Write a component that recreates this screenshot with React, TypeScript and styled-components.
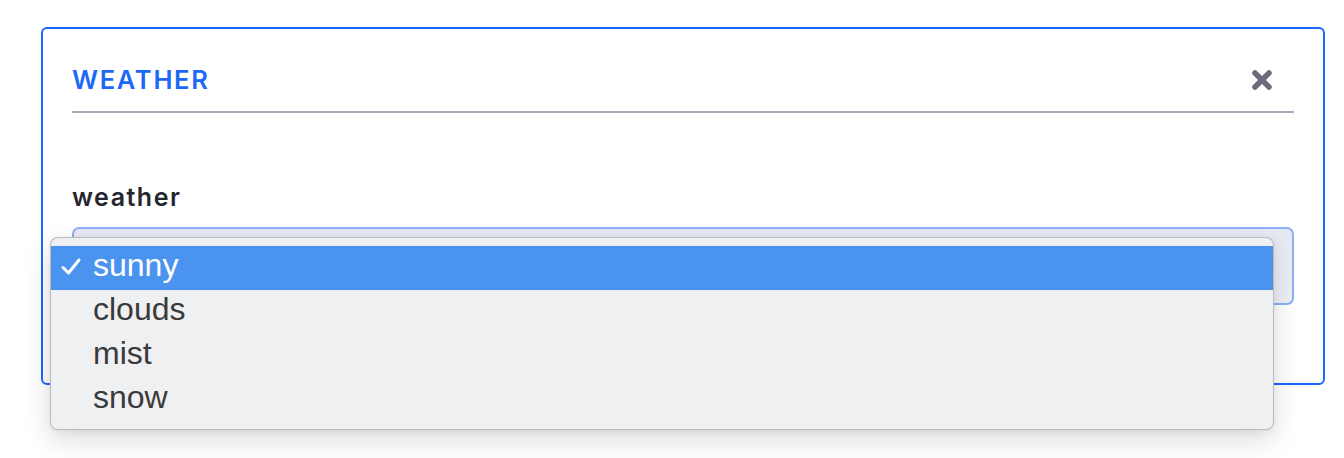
import React from "react";
import styled, { createGlobalStyle } from "styled-components";

const Global = createGlobalStyle`
  html, body { margin: 0; padding: 0; background: #ffffff; }
  body { font-family: Inter, "Liberation Sans", sans-serif; }
  * { box-sizing: border-box; }
`;

const Page = styled.div`
  padding: 27px 19px 0 41px;
  width: 1344px;
  height: 458px;
`;

const Card = styled.section`
  width: 1284px;
  border: 2px solid #1a67ff;
  border-radius: 6px;
  padding: 0 29px 78px;
  background: #fff;
`;

const Header = styled.header`
  display: flex;
  align-items: center;
  justify-content: space-between;
  padding: 38px 0 18px;
  border-bottom: 2px solid #a9a9ba;
`;

const Title = styled.h2`
  margin: 0;
  font-family: Inter, "Liberation Sans", sans-serif;
  font-size: 25.5px;
  line-height: 26px;
  font-weight: 600;
  letter-spacing: 1.7px;
  color: #1d68f6;
`;

const CloseButton = styled.button`
  display: flex;
  align-items: center;
  justify-content: center;
  width: 22px;
  height: 22px;
  margin-right: 21px;
  padding: 0;
  border: 0;
  background: none;
  cursor: pointer;
`;

const Body = styled.div`
  padding-top: 70px;
`;

const Label = styled.label`
  display: block;
  font-family: Inter, "Liberation Sans", sans-serif;
  font-size: 25px;
  line-height: 29px;
  font-weight: 600;
  letter-spacing: 1.5px;
  color: #26262f;
  margin-bottom: 15px;
`;

const SelectWrap = styled.div`
  position: relative;
`;

const SelectBox = styled.div`
  height: 78px;
  border: 2px solid #8ab0f5;
  border-radius: 7px;
  background: linear-gradient(#e6e9f3, #eef0f6);
`;

const Popup = styled.ul`
  position: absolute;
  left: -22px;
  top: 10px;
  width: 1224px;
  margin: 0;
  padding: 8px 0 7px;
  list-style: none;
  background: #eff0f2;
  border: 1px solid rgba(0, 0, 0, 0.22);
  border-radius: 8px;
  box-shadow: 0 10px 28px rgba(0, 0, 0, 0.14), 0 2px 6px rgba(0, 0, 0, 0.06);
  z-index: 2;
`;

const Option = styled.li<{ $selected?: boolean }>`
  position: relative;
  height: 44px;
  padding: 0 0 5px 42px;
  display: flex;
  align-items: center;
  font-family: "Liberation Sans", Arial, sans-serif;
  font-size: 32px;
  color: ${(p) => (p.$selected ? "#ffffff" : "#3a3a3c")};
  background: ${(p) => (p.$selected ? "#4a94f0" : "transparent")};
`;

const Check = styled.svg`
  position: absolute;
  left: 9px;
  top: 11px;
`;

const options = ["sunny", "clouds", "mist", "snow"];

export default function App() {
  return (
    <>
      <Global />
      <Page>
        <Card>
          <Header>
            <Title>WEATHER</Title>
            <CloseButton aria-label="close">
              <svg width="22" height="22" viewBox="0 0 22 22">
                <path
                  d="M4 4 L18 18 M18 4 L4 18"
                  stroke="#6c6b7b"
                  strokeWidth="5.5"
                  strokeLinecap="round"
                />
              </svg>
            </CloseButton>
          </Header>
          <Body>
            <Label>weather</Label>
            <SelectWrap>
              <SelectBox />
              <Popup>
                {options.map((o, i) => (
                  <Option key={o} $selected={i === 0}>
                    {i === 0 && (
                      <Check width="22" height="20" viewBox="0 0 22 20">
                        <path
                          d="M3 10.5 L8.5 16 L19 3"
                          fill="none"
                          stroke="#ffffff"
                          strokeWidth="3"
                          strokeLinecap="round"
                          strokeLinejoin="round"
                        />
                      </Check>
                    )}
                    {o}
                  </Option>
                ))}
              </Popup>
            </SelectWrap>
          </Body>
        </Card>
      </Page>
    </>
  );
}
